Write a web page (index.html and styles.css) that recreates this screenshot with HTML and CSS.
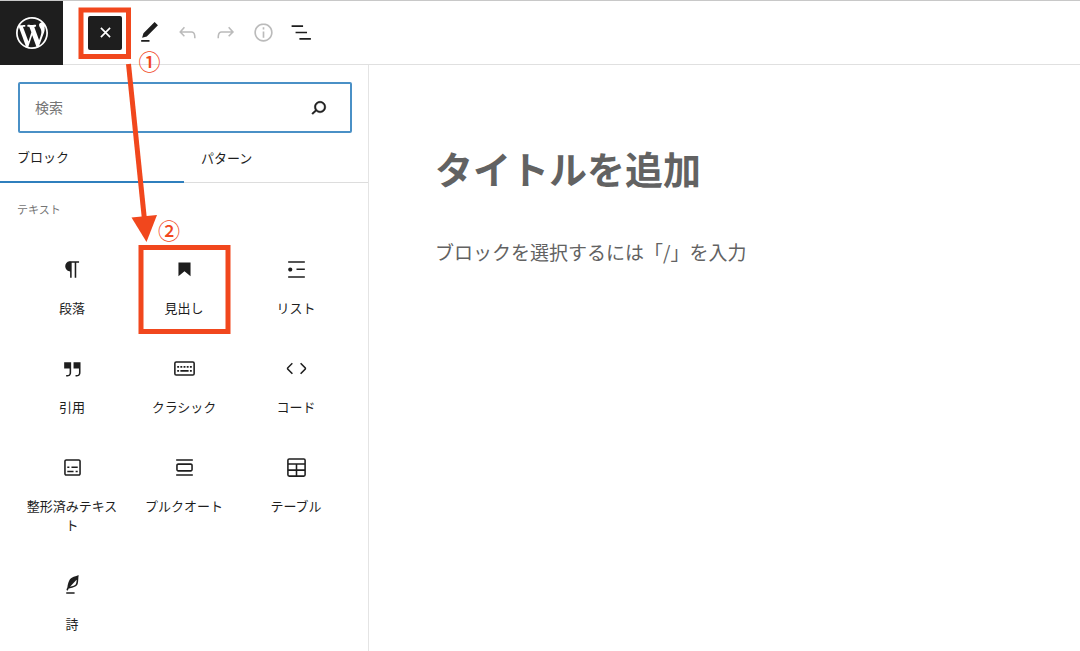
FILE: index.html
```html
<!DOCTYPE html>
<html lang="ja">
<head>
<meta charset="utf-8">
<meta name="viewport" content="width=device-width, initial-scale=1">
<title>投稿を編集</title>
<link rel="stylesheet" href="styles.css">
</head>
<body>
<div class="editor">
  <header class="topbar">
    <a class="site-logo" href="#" aria-label="WordPress">
      <svg viewBox="0 0 20 20"><path d="M20 10c0-5.51-4.49-10-10-10C4.48 0 0 4.49 0 10c0 5.52 4.48 10 10 10 5.51 0 10-4.48 10-10zM7.78 15.37L4.37 6.22c.55-.02 1.17-.08 1.17-.08.5-.06.44-1.13-.06-1.11 0 0-1.45.11-2.37.11-.18 0-.37 0-.58-.01C4.12 2.69 6.87 1.11 10 1.11c2.33 0 4.45.87 6.05 2.34-.68-.11-1.65.39-1.65 1.58 0 .74.45 1.36.9 2.1.35.61.55 1.36.55 2.46 0 1.49-1.4 5-1.4 5l-3.03-8.37c.54-.02.82-.17.82-.17.5-.05.44-1.25-.06-1.22 0 0-1.44.12-2.38.12-.87 0-2.33-.12-2.33-.12-.5-.03-.56 1.2-.06 1.22l.92.08 1.26 3.41zM17.41 10c.24-.64.74-1.87.43-4.25.7 1.29 1.05 2.71 1.05 4.25 0 3.29-1.73 6.24-4.4 7.78.97-2.59 1.94-5.2 2.92-7.78zM6.1 18.09C3.12 16.65 1.11 13.53 1.11 10c0-1.3.23-2.48.72-3.59C3.25 10.3 4.67 14.2 6.1 18.09zm4.03-6.63l2.58 6.98c-.86.29-1.76.45-2.71.45-.79 0-1.57-.11-2.29-.33.81-2.38 1.62-4.74 2.42-7.1z"/></svg>
    </a>
    <div class="tools">
      <button class="inserter-toggle" type="button" aria-label="閉じる"><svg class="icon" viewBox="0 0 24 24"><path d="M7.6 7.6l8.8 8.8M16.4 7.6l-8.8 8.8" fill="none" stroke="currentColor" stroke-width="1.6"/></svg></button>
      <button class="tool" type="button" aria-label="ツール"><svg class="icon" viewBox="0 0 24 24"><path d="M20.1 5.1L16.9 2 6.2 12.7l-1.3 4.4 4.5-1.3L20.1 5.1zM4 20.8h8v-1.5H4v1.5z"/></svg></button>
      <button class="tool" type="button" aria-label="元に戻す" disabled><svg class="icon" viewBox="0 0 24 24"><path d="M18.3 11.7c-.6-.6-1.4-.9-2.3-.9H6.7l2.9-3.3-1.1-1-4.5 5L8.5 16l1-1-2.7-2.7H16c.5 0 .9.2 1.3.5 1 1 1 3.4 1 4.5v.3h1.5v-.2c0-1.5 0-4.3-1.5-5.7z"/></svg></button>
      <button class="tool" type="button" aria-label="やり直す" disabled><svg class="icon" viewBox="0 0 24 24"><path d="M15.6 6.5l-1.1 1 2.9 3.3H8c-.9 0-1.7.3-2.3.9-1.4 1.5-1.4 4.2-1.4 5.6v.2h1.5v-.3c0-1.1 0-3.5 1-4.5.3-.3.7-.5 1.3-.5h9.2L14.5 15l1.1 1.1 4.6-4.6-4.6-5z"/></svg></button>
      <button class="tool" type="button" aria-label="詳細" disabled><svg class="icon" viewBox="0 0 24 24"><path d="M12 3.2c-4.8 0-8.8 3.9-8.8 8.8 0 4.8 3.9 8.8 8.8 8.8 4.8 0 8.8-3.9 8.8-8.8 0-4.8-4-8.8-8.8-8.8zm0 16c-4 0-7.2-3.3-7.2-7.2C4.8 8 8 4.8 12 4.8s7.2 3.3 7.2 7.2c0 4-3.2 7.2-7.2 7.2zM11.2 17h1.6v-6h-1.6v6zm0-8h1.6V7h-1.6v2z"/></svg></button>
      <button class="tool" type="button" aria-label="リスト表示"><svg class="icon" viewBox="0 0 24 24"><path d="M2.500 5h11v1.600h-11V5zm3.800 6.200h11v1.600h-11v-1.600zM21 17.300H10v1.600h11v-1.600z"/></svg></button>
    </div>
  </header>

  <div class="workspace">
    <aside class="inserter">
      <form class="search" role="search">
        <input class="search-input" type="search" placeholder="検索" aria-label="検索">
        <button class="search-button" type="button" aria-label="検索"><svg class="icon" viewBox="0 0 24 24"><path stroke="currentColor" stroke-width=".4" d="M13.5 6C10.5 6 8 8.500 8 11.500c0 1.100.3 2.100.9 3l-3.400 3 1 1.100 3.400-2.900c1 .9 2.200 1.400 3.600 1.400 3 0 5.500-2.500 5.500-5.500C19 8.500 16.500 6 13.500 6zm0 9.500c-2.200 0-4-1.800-4-4s1.800-4 4-4 4 1.800 4 4-1.800 4-4 4z"/></svg></button>
      </form>
      <div class="tabs" role="tablist">
        <button class="tab tab-active" type="button" role="tab" aria-selected="true">ブロック</button>
        <button class="tab" type="button" role="tab" aria-selected="false">パターン</button>
      </div>
      <h2 class="group-title">テキスト</h2>
      <div class="blocks">
        <button class="block" type="button"><svg class="icon" viewBox="0 0 24 24"><path d="M18.3 4H9.9v-.1l-.9.2c-2.3.4-4 2.4-4 4.8s1.7 4.4 4 4.800l.7.1V20h1.500V5.500h2.900V20h1.500V5.500h2.700V4z"/></svg><span>段落</span></button>
        <button class="block" type="button"><svg class="icon" viewBox="0 0 24 24"><path d="M6.200 5.200v13.400l5.800-4.800 5.800 4.800V5.200z"/></svg><span>見出し</span></button>
        <button class="block" type="button"><svg class="icon" viewBox="0 0 24 24"><path d="M4 4v1.500h16V4H4zm8 8.500h8V11h-8v1.500zM4 20h16v-1.500H4V20zm4-8c0-1.100-.9-2-2-2s-2 .9-2 2 .9 2 2 2 2-.9 2-2z"/></svg><span>リスト</span></button>
        <button class="block" type="button"><svg class="icon" viewBox="0 0 24 24"><path d="M13 6v6h5.200v4c0 .8-.2 1.400-.5 1.700-.6.6-1.600.6-2.500.5h-.3v1.500h.5c1 0 2.300-.1 3.300-1 .6-.6 1-1.600 1-2.800V6H13zm-9 6h5.200v4c0 .8-.2 1.400-.5 1.700-.6.6-1.600.6-2.500.5h-.3v1.500h.5c1 0 2.300-.1 3.300-1 .6-.6 1-1.600 1-2.800V6H4v6z"/></svg><span>引用</span></button>
        <button class="block" type="button"><svg class="icon" viewBox="0 0 24 24"><rect x="2.750" y="5.750" width="18.500" height="12.500" rx="1.300" fill="none" stroke="currentColor" stroke-width="1.500"/><path d="M5 9.500h1.800v1.700H5zM8.050 9.500h1.800v1.700h-1.800zM11.100 9.500h1.800v1.700h-1.800zM14.150 9.500h1.800v1.700h-1.800zM17.200 9.500H19v1.700h-1.800zM5 13.400h1.800v1.700H5zM8.050 13.400h7.900v1.700h-7.900zM17.200 13.400H19v1.700h-1.800z"/></svg><span>クラシック</span></button>
        <button class="block" type="button"><svg class="icon" viewBox="0 0 24 24"><path d="M20.800 10.700l-4.300-4.300-1.100 1.100 4.300 4.300c.1.100.1.300 0 .4l-4.300 4.300 1.100 1.100 4.300-4.300c.7-.8.7-1.900 0-2.600zM4.200 11.800l4.300-4.300-1-1-4.300 4.300c-.7.7-.7 1.800 0 2.500l4.300 4.300 1.100-1.100-4.300-4.300c-.2-.1-.2-.3-.1-.4z"/></svg><span>コード</span></button>
        <button class="block" type="button"><svg class="icon" viewBox="0 0 24 24"><path d="M18 4H6c-1.100 0-2 .9-2 2v12c0 1.100.9 2 2 2h12c1.100 0 2-.9 2-2V6c0-1.100-.9-2-2-2zm.5 14c0 .3-.2.5-.5.5H6c-.3 0-.5-.2-.5-.5V6c0-.3.2-.5.5-.5h12c.3 0 .5.2.5.5v12zM7 16.500h6V15H7v1.500zm4-4h6V11h-6v1.500zM9 11H7v1.500h2V11zm6 5.500h2V15h-2v1.500z"/></svg><span>整形済みテキスト</span></button>
        <button class="block" type="button"><svg class="icon" viewBox="0 0 24 24"><path d="M18 8H6c-1.100 0-2 .9-2 2v4c0 1.100.9 2 2 2h12c1.100 0 2-.9 2-2v-4c0-1.100-.9-2-2-2zm.5 6c0 .3-.2.5-.5.5H6c-.3 0-.5-.2-.5-.5v-4c0-.3.2-.5.5-.5h12c.3 0 .5.2.5.5v4zM4 4v1.500h16V4H4zm0 16h16v-1.500H4V20z"/></svg><span>プルクオート</span></button>
        <button class="block" type="button"><svg class="icon" viewBox="0 0 24 24"><path d="M5 3.750h14c.7 0 1.250.55 1.250 1.250v14c0 .7-.55 1.250-1.250 1.250H5c-.7 0-1.250-.55-1.250-1.250V5c0-.7.55-1.250 1.250-1.250zM3.750 8.700h16.500M3.750 14.500h16.500M12 8.700v11.500" fill="none" stroke="currentColor" stroke-width="1.500"/></svg><span>テーブル</span></button>
        <button class="block" type="button"><svg class="icon" viewBox="0 0 24 24"><path d="M17.800 2l-.9.3c-.1 0-3.600 1-5.200 2.100C10 5.500 9.300 6.500 8.900 7.100c-.6.9-1.700 4.700-1.700 6.300l-.9 2.300c-.2.4 0 .8.4 1 .1 0 .2.1.3.1.3 0 .6-.2.7-.5l.6-1.500c.3 0 .7-.1 1.200-.2.7-.1 1.400-.3 2.200-.5.8-.2 1.600-.5 2.400-.8.7-.3 1.400-.7 1.900-1.200s.8-1.200 1-1.900c.2-.7.3-1.600.4-2.400.1-.8.1-1.700.2-2.500 0-.8.1-1.500.2-2.100V2zm-1.900 5.600c-.1.8-.2 1.500-.3 2.100-.2.6-.4 1-.6 1.300-.3.3-.8.6-1.400.9-.7.3-1.400.5-2.200.8-.6.2-1.300.3-1.800.4L15 7.500c.3-.3.6-.7 1-1.100 0 .4 0 .8-.1 1.200zM6 20h8v-1.500H6V20z"/></svg><span>詩</span></button>
      </div>
    </aside>
    <main class="canvas">
      <h1 class="post-title">タイトルを追加</h1>
      <p class="post-body">ブロックを選択するには「/」を入力</p>
    </main>
  </div>

  <svg class="guide" viewBox="0 0 240 340" width="240" height="340" aria-hidden="true">
    <rect class="guide-box" x="81" y="10" width="47.500" height="46.500"/>
    <rect class="guide-box" x="141" y="247.500" width="87" height="84"/>
    <path class="guide-line" d="M128.500 64L144.500 220"/>
    <path class="guide-head" d="M131.500 217.500L157 215L146.500 242z"/>
    <text class="guide-number" x="149.500" y="70">①</text>
    <text class="guide-number" x="169" y="239">②</text>
  </svg>
</div>
</body>
</html>
```
FILE: styles.css
```css
* {
  box-sizing: border-box;
}

body {
  margin: 0;
  background: #fff;
  color: #1e1e1e;
  font-family: "Noto Sans CJK JP", sans-serif;
  font-size: 13px;
}

button {
  margin: 0;
  padding: 0;
  border: 0;
  background: none;
  color: inherit;
  font: inherit;
}

.editor {
  position: relative;
  display: flex;
  flex-direction: column;
  min-height: 100vh;
  border-top: 1px solid #c8c8c8;
}

.icon {
  display: block;
  flex: none;
  width: 25px;
  height: 25px;
  fill: currentColor;
}

.topbar {
  display: flex;
  align-items: stretch;
  border-bottom: 1px solid #e0e0e0;
}

.site-logo {
  display: flex;
  align-items: center;
  justify-content: center;
  width: 63px;
  height: 64px;
  margin-bottom: -1px;
  background: #1e1e1e;
}

.site-logo svg {
  width: 32px;
  height: 32px;
  fill: #fff;
}

.tools {
  display: flex;
  align-items: center;
  padding-left: 25px;
}

.inserter-toggle,
.tool {
  display: flex;
  align-items: center;
  justify-content: center;
}

.inserter-toggle {
  width: 34px;
  height: 34px;
  margin-right: 8px;
  border-radius: 2px;
  background: #1e1e1e;
  color: #fff;
}

.tool {
  width: 38px;
  height: 38px;
}

.tool:disabled {
  color: #bbb;
}

.workspace {
  display: flex;
  flex: 1;
}

.inserter {
  flex: none;
  width: 369px;
  border-right: 1px solid #e4e4e4;
}

.search {
  display: flex;
  align-items: center;
  height: 51px;
  margin: 17px 16px 0 18px;
  padding: 0 19px 0 15px;
  border: 2px solid #4a90c6;
  border-radius: 2px;
}

.search-input {
  flex: 1;
  min-width: 0;
  height: 27px;
  margin-bottom: 2px;
  padding: 0;
  border: 0;
  outline: 0;
  background: none;
  color: inherit;
  font: inherit;
  font-size: 14px;
}

.search-input::placeholder {
  color: #757575;
  opacity: 1;
}

.tabs {
  display: flex;
}

.tab {
  flex: 1;
  height: 50px;
  padding: 0 17px 1px;
  border-bottom: 1px solid #ddd;
  font-size: 13px;
  text-align: left;
}

.tab-active {
  border-bottom: 2px solid #2f7fbd;
}

.group-title {
  margin: 0;
  padding: 16px 17px 21px;
  color: #757575;
  font-size: 11px;
  font-weight: 400;
  line-height: 20px;
}

.blocks {
  display: grid;
  grid-template-columns: repeat(3, 1fr);
  padding: 0 16px;
}

.block {
  display: flex;
  flex-direction: column;
  align-items: center;
  gap: 16px;
  padding: 17px 8px 22px;
  line-height: 19px;
}

.canvas {
  flex: 1;
  padding: 75px 66px;
  color: #626262;
}

.post-title {
  margin: 0;
  font-size: 38px;
  font-weight: 700;
  line-height: 56px;
}

.post-body {
  margin: 42px 0 0;
  font-size: 19px;
  line-height: 28px;
}

.guide {
  position: absolute;
  top: -1px;
  left: 0;
  pointer-events: none;
}

.guide-box {
  fill: none;
  stroke: #f1471d;
  stroke-width: 5px;
}

.guide-line {
  stroke: #f1471d;
  stroke-width: 5px;
}

.guide-head,
.guide-number {
  fill: #f1471d;
}

.guide-number {
  font-size: 22px;
  font-weight: 500;
  text-anchor: middle;
}
```
